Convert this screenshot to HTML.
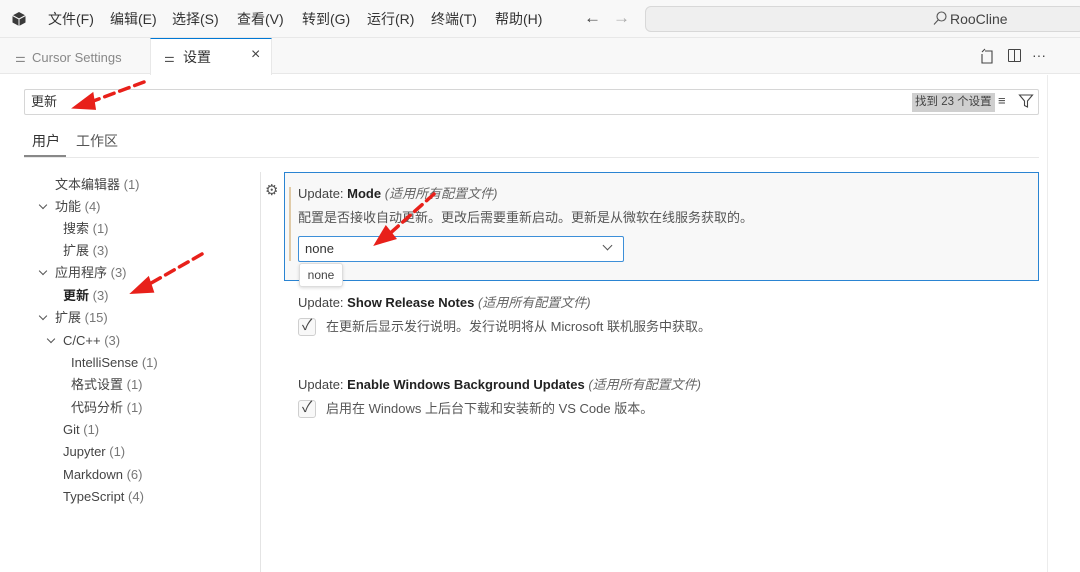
<!DOCTYPE html>
<html><head><meta charset="utf-8"><style>
*{margin:0;padding:0;box-sizing:border-box}
body{width:1080px;height:572px;overflow:hidden;background:#fff;font-family:"Liberation Sans","Noto Sans CJK SC",sans-serif;color:#3b3b3b;position:relative;font-size:13px}
.a{position:absolute;white-space:nowrap;line-height:18px}
.tree div{position:absolute;white-space:nowrap;font-size:13px;color:#444;line-height:16px;height:16px}
.tree span{color:#777}
.chev{display:inline-block;width:6px;height:6px;border-right:1.3px solid #555;border-bottom:1.3px solid #555;transform:rotate(45deg);margin-right:9px;position:relative;top:-3px}
.cb{position:absolute;width:18px;height:18px;border:1px solid #cfcfcf;border-radius:3px;background:#f8f8f8}
</style></head><body>
<div class="a" style="left:0;top:0;width:1080px;height:38px;background:#f8f8f8;border-bottom:1px solid #e8e8e8"></div>
<svg class="a" style="left:11px;top:11px" width="16" height="16" viewBox="0 0 16 16"><path d="M8 1 L14.5 4.5 V11.5 L8 15 L1.5 11.5 V4.5Z" fill="#3a3a3a"/><path d="M8 8 L14.5 4.5 M8 8 V15 M8 8 L1.5 4.5" stroke="#f8f8f8" stroke-width="1"/></svg>
<div class="a" style="left:48px;top:10px;font-size:14px;color:#333">文件(F)</div>
<div class="a" style="left:110px;top:10px;font-size:14px;color:#333">编辑(E)</div>
<div class="a" style="left:172px;top:10px;font-size:14px;color:#333">选择(S)</div>
<div class="a" style="left:237px;top:10px;font-size:14px;color:#333">查看(V)</div>
<div class="a" style="left:302px;top:10px;font-size:14px;color:#333">转到(G)</div>
<div class="a" style="left:367px;top:10px;font-size:14px;color:#333">运行(R)</div>
<div class="a" style="left:431px;top:10px;font-size:14px;color:#333">终端(T)</div>
<div class="a" style="left:495px;top:10px;font-size:14px;color:#333">帮助(H)</div>
<div class="a" style="left:584px;top:9px;font-size:17px;color:#444">←</div>
<div class="a" style="left:613px;top:9px;font-size:17px;color:#aaa">→</div>
<div class="a" style="left:645px;top:6px;width:440px;height:26px;border:1px solid #d8d8d8;border-radius:6px;background:#efefef"></div>
<svg class="a" style="left:933px;top:11px" width="14" height="15" viewBox="0 0 14 15"><circle cx="8.5" cy="5.5" r="4.5" fill="none" stroke="#555" stroke-width="1.1"/><path d="M5.3 8.8 L1 13.5" stroke="#555" stroke-width="1.1"/></svg>
<div class="a" style="left:950px;top:10px;font-size:14px;color:#444">RooCline</div>
<div class="a" style="left:0;top:38px;width:1080px;height:36px;background:#f8f8f8;border-bottom:1px solid #e8e8e8"></div>
<div class="a" style="left:150px;top:38px;width:122px;height:37px;background:#fff;border-top:1px solid #0078d4;border-right:1px solid #e8e8e8;border-left:1px solid #e8e8e8"></div>
<div class="a" style="left:15px;top:49px;font-size:12px;color:#888">⚌</div>
<div class="a" style="left:32px;top:49px;font-size:13px;color:#888">Cursor Settings</div>
<div class="a" style="left:164px;top:49px;font-size:12px;color:#555">⚌</div>
<div class="a" style="left:183px;top:48px;font-size:14px;color:#333">设置</div>
<div class="a" style="left:251px;top:46px;font-size:16px;color:#444">×</div>
<svg class="a" style="left:979px;top:48px" width="18" height="16" viewBox="0 0 18 16"><path d="M6 3 H13 V15 H3 V6 M3 4 L6 1" fill="none" stroke="#444" stroke-width="1.1"/></svg>
<div class="a" style="left:1008px;top:49px;width:13px;height:13px;border:1.2px solid #444;border-radius:1px"></div>
<div class="a" style="left:1014px;top:49px;width:1px;height:13px;background:#444"></div>
<div class="a" style="left:1032px;top:46px;font-size:14px;color:#444">···</div>
<div class="a" style="left:1047px;top:75px;width:1px;height:497px;background:#ececec"></div>
<div class="a" style="left:24px;top:89px;width:1015px;height:26px;border:1px solid #d6d6d6;border-radius:2px"></div>
<div class="a" style="left:31px;top:93px;font-size:13px;color:#333">更新</div>
<div class="a" style="left:912px;top:93px;height:19px;padding:0 3px;background:#cfcfcf;font-size:11.5px;line-height:19px;color:#444">找到 23 个设置</div>
<div class="a" style="left:998px;top:92px;font-size:13px;color:#444">≡</div>
<svg class="a" style="left:1018px;top:93px" width="16" height="16" viewBox="0 0 16 16"><path d="M1.5 2 H14.5 L9.5 8 V14 L6.5 12.5 V8Z" fill="none" stroke="#444" stroke-width="1.1"/></svg>
<div class="a" style="left:32px;top:132px;font-size:14px;color:#333">用户</div>
<div class="a" style="left:76px;top:132px;font-size:14px;color:#555">工作区</div>
<div class="a" style="left:24px;top:157px;width:1015px;height:1px;background:#e8e8e8"></div>
<div class="a" style="left:24px;top:155px;width:42px;height:2px;background:#888"></div>
<div class="tree">
<div style="left:55px;top:177px">文本编辑器 <span>(1)</span></div>
<div style="left:40px;top:199px"><i class="chev"></i>功能 <span>(4)</span></div>
<div style="left:63px;top:221px">搜索 <span>(1)</span></div>
<div style="left:63px;top:243px">扩展 <span>(3)</span></div>
<div style="left:40px;top:265px"><i class="chev"></i>应用程序 <span>(3)</span></div>
<div style="left:63px;top:288px;font-weight:bold;color:#222">更新 <span style="font-weight:normal">(3)</span></div>
<div style="left:40px;top:310px"><i class="chev"></i>扩展 <span>(15)</span></div>
<div style="left:48px;top:333px"><i class="chev"></i>C/C++ <span>(3)</span></div>
<div style="left:71px;top:355px">IntelliSense <span>(1)</span></div>
<div style="left:71px;top:377px">格式设置 <span>(1)</span></div>
<div style="left:71px;top:400px">代码分析 <span>(1)</span></div>
<div style="left:63px;top:422px">Git <span>(1)</span></div>
<div style="left:63px;top:444px">Jupyter <span>(1)</span></div>
<div style="left:63px;top:467px">Markdown <span>(6)</span></div>
<div style="left:63px;top:489px">TypeScript <span>(4)</span></div>
</div>
<div class="a" style="left:260px;top:172px;width:1px;height:400px;background:#e4e4e4"></div>
<div class="a" style="left:284px;top:172px;width:755px;height:109px;border:1px solid #2a84d2;background:#f8f8f8"></div>
<div class="a" style="left:289px;top:187px;width:2px;height:74px;background:#e0cba8"></div>
<div class="a" style="left:265px;top:182px;font-size:15px;color:#555">⚙</div>
<div class="a" style="left:298px;top:185px;font-size:13px;color:#444">Update: <b style="color:#222;font-weight:600">Mode</b> <i style="color:#666">(适用所有配置文件)</i></div>
<div class="a" style="left:298px;top:209px;font-size:13px;color:#555">配置是否接收自动更新。更改后需要重新启动。更新是从微软在线服务获取的。</div>
<div class="a" style="left:298px;top:236px;width:326px;height:26px;border:1px solid #3d8fd8;border-radius:2px;background:#fff"></div>
<div class="a" style="left:305px;top:240px;font-size:13px;color:#333">none</div>
<div class="a" style="left:604px;top:242px;width:7px;height:7px;border-right:1.2px solid #555;border-bottom:1.2px solid #555;transform:rotate(45deg)"></div>
<div class="a" style="left:299px;top:263px;width:44px;height:24px;border:1px solid #ddd;border-radius:3px;background:#fff;box-shadow:0 1px 3px rgba(0,0,0,.15);font-size:12px;line-height:22px;text-align:center;color:#444">none</div>
<div class="a" style="left:298px;top:294px;font-size:13px;color:#444">Update: <b style="color:#222;font-weight:600">Show Release Notes</b> <i style="color:#666">(适用所有配置文件)</i></div>
<div class="cb" style="left:298px;top:318px"></div><div class="a" style="left:302px;top:317px;font-size:15px;color:#444">✓</div>
<div class="a" style="left:326px;top:318px;font-size:13px;color:#555">在更新后显示发行说明。发行说明将从 Microsoft 联机服务中获取。</div>
<div class="a" style="left:298px;top:376px;font-size:13px;color:#444">Update: <b style="color:#222;font-weight:600">Enable Windows Background Updates</b> <i style="color:#666">(适用所有配置文件)</i></div>
<div class="cb" style="left:298px;top:400px"></div><div class="a" style="left:302px;top:399px;font-size:15px;color:#444">✓</div>
<div class="a" style="left:326px;top:400px;font-size:13px;color:#555">启用在 Windows 上后台下载和安装新的 VS Code 版本。</div>
<svg class="a" style="left:0;top:0" width="1080" height="572">
<g stroke="#e8201a" stroke-width="3.5" fill="#e8201a" stroke-linecap="round">
<path d="M144 82 L88 103" stroke-dasharray="10 6" fill="none"/><path d="M76 107 L92 95 L94 108Z"/>
<path d="M202 254 L146 286" stroke-dasharray="10 6" fill="none"/><path d="M134 292 L148 279 L152 291Z"/>
<path d="M434 194 L386 237" stroke-dasharray="10 6" fill="none"/><path d="M377 243 L386 228 L394 238Z"/>
</g></svg>
</body></html>
